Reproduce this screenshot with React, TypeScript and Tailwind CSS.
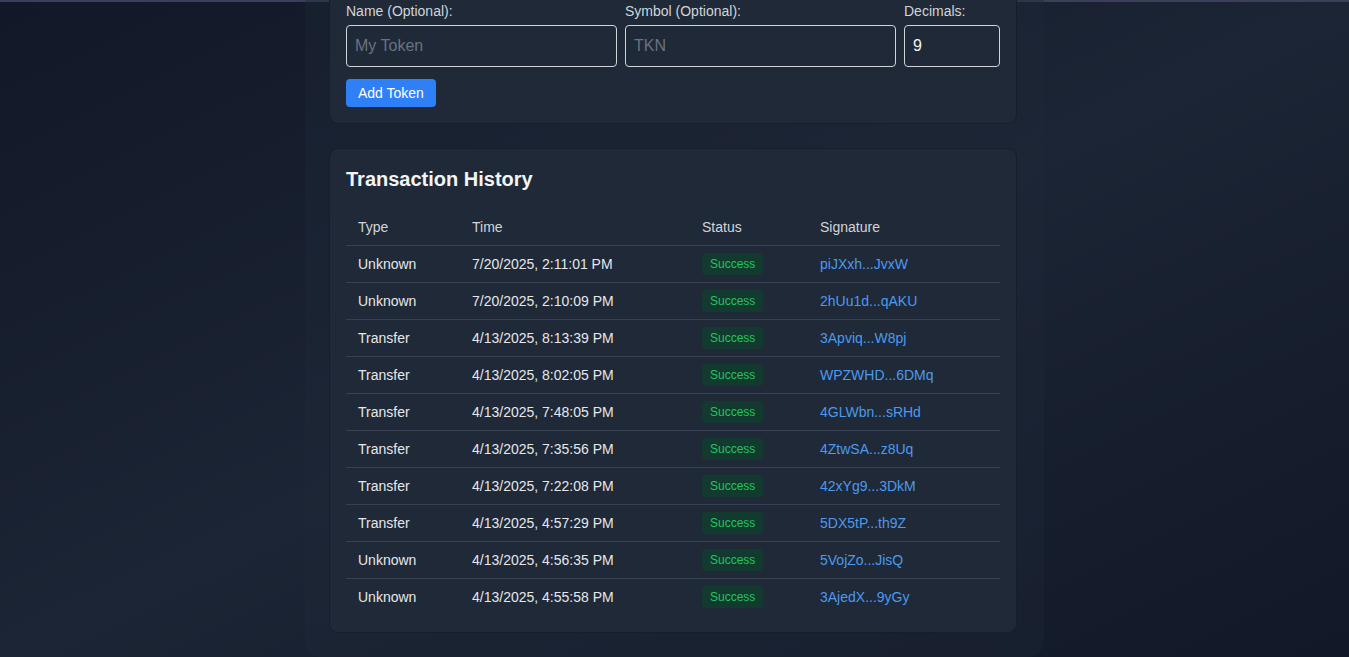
import React from "react";

type Tx = {
  type: string;
  time: string;
  status: string;
  signature: string;
};

const transactions: Tx[] = [
  { type: "Unknown", time: "7/20/2025, 2:11:01 PM", status: "Success", signature: "piJXxh...JvxW" },
  { type: "Unknown", time: "7/20/2025, 2:10:09 PM", status: "Success", signature: "2hUu1d...qAKU" },
  { type: "Transfer", time: "4/13/2025, 8:13:39 PM", status: "Success", signature: "3Apviq...W8pj" },
  { type: "Transfer", time: "4/13/2025, 8:02:05 PM", status: "Success", signature: "WPZWHD...6DMq" },
  { type: "Transfer", time: "4/13/2025, 7:48:05 PM", status: "Success", signature: "4GLWbn...sRHd" },
  { type: "Transfer", time: "4/13/2025, 7:35:56 PM", status: "Success", signature: "4ZtwSA...z8Uq" },
  { type: "Transfer", time: "4/13/2025, 7:22:08 PM", status: "Success", signature: "42xYg9...3DkM" },
  { type: "Transfer", time: "4/13/2025, 4:57:29 PM", status: "Success", signature: "5DX5tP...th9Z" },
  { type: "Unknown", time: "4/13/2025, 4:56:35 PM", status: "Success", signature: "5VojZo...JisQ" },
  { type: "Unknown", time: "4/13/2025, 4:55:58 PM", status: "Success", signature: "3AjedX...9yGy" },
];

const Field = ({
  label,
  placeholder,
  value,
  className,
}: {
  label: string;
  placeholder?: string;
  value?: string;
  className?: string;
}) => (
  <div className={`flex flex-col ${className ?? ""}`}>
    <label className="text-sm leading-5 text-[#d1d5db] mb-1">{label}</label>
    <input
      className="h-[42px] w-full rounded border border-[#d1d5db] bg-[#1f2937] px-2 text-base text-[#f3f4f6] placeholder:text-[#6b7280] outline-none"
      placeholder={placeholder}
      defaultValue={value}
    />
  </div>
);

export default function App() {
  return (
    <div
      className="min-h-screen border-t-2 border-[#3c3e5a] bg-gradient-to-br from-[#111827] via-[#1c2535] to-[#111827]"
      style={{ fontFamily: '"Liberation Sans", Arial, sans-serif' }}
    >
      <div className="mx-auto w-[739px] rounded-b-2xl bg-[#1f2937]/40 pl-[25px] pr-[28px] pb-[25px]">
        {/* add token card, scrolled past its top */}
        <div className="-mt-[17px] mb-[26px] rounded-lg bg-[#1f2937] p-4 shadow-[0_0_0_1px_#161e2b]">
          <div className="flex gap-2">
            <Field label="Name (Optional):" placeholder="My Token" className="flex-1" />
            <Field label="Symbol (Optional):" placeholder="TKN" className="flex-1" />
            <Field label="Decimals:" value="9" className="w-24" />
          </div>
          <button className="mt-3 h-7 rounded bg-[#2f80f7] px-3 text-sm text-white">
            Add Token
          </button>
        </div>

        <div className="rounded-lg bg-[#1f2937] p-4 shadow-[0_0_0_1px_#161e2b]">
          <h2 className="mb-4 text-xl font-bold leading-7 text-[#f3f4f6]">
            Transaction History
          </h2>
          <table className="w-full table-fixed border-collapse text-sm">
            <thead>
              <tr className="border-b border-[#374151]">
                <th className="w-[114px] px-3 py-2 text-left font-normal text-[#d1d5db]">Type</th>
                <th className="w-[230px] px-3 py-2 text-left font-normal text-[#d1d5db]">Time</th>
                <th className="w-[118px] px-3 py-2 text-left font-normal text-[#d1d5db]">Status</th>
                <th className="px-3 py-2 text-left font-normal text-[#d1d5db]">Signature</th>
              </tr>
            </thead>
            <tbody>
              {transactions.map((tx, i) => (
                <tr
                  key={tx.signature}
                  className={`h-[37px] ${i < transactions.length - 1 ? "border-b border-[#374151]" : ""}`}
                >
                  <td className="px-3 py-0 align-middle text-[#e5e7eb]">{tx.type}</td>
                  <td className="px-3 py-0 align-middle text-[#e5e7eb]">{tx.time}</td>
                  <td className="px-3 py-0 align-middle">
                    <span className="inline-block rounded bg-[#133a2e] px-2 py-[3px] text-xs leading-4 text-[#22c55e]">
                      {tx.status}
                    </span>
                  </td>
                  <td className="px-3 py-0 align-middle text-[#4b9af0]">{tx.signature}</td>
                </tr>
              ))}
            </tbody>
          </table>
        </div>
      </div>
    </div>
  );
}
